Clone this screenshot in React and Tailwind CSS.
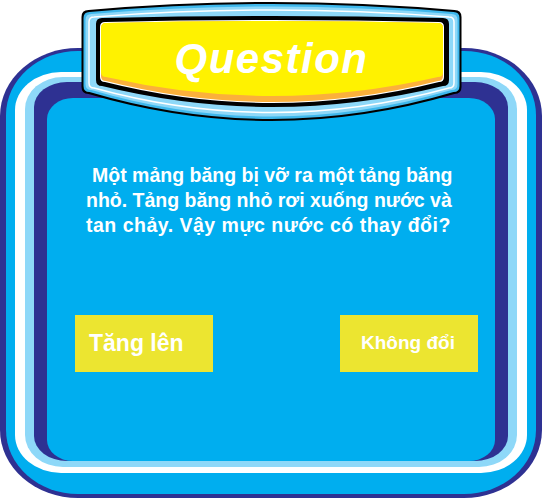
import React from 'react';

// rounded banner outline: flat-ish top arc, deeper bottom arc
const shape = (l, r, tc, tm, bc, bm, rad) => {
  const cx = (l + r) / 2;
  return `M${l + rad} ${tc} Q${cx} ${2 * tm - tc} ${r - rad} ${tc} Q${r} ${tc} ${r} ${tc + rad} L${r} ${bc - rad} Q${r} ${bc} ${r - rad} ${bc} Q${cx} ${2 * bm - bc} ${l + rad} ${bc} Q${l} ${bc} ${l} ${bc - rad} L${l} ${tc + rad} Q${l} ${tc} ${l + rad} ${tc} Z`;
};

function Banner() {
  return (
    <div className="absolute left-[80px] top-0 z-10 h-[124px] w-[383px]">
      <svg width="383" height="124" viewBox="0 0 383 124" className="absolute inset-0">
        <path d={shape(1.5, 381.5, 10, 2, 94, 121, 7)} fill="#000" />
        <path d={shape(3.5, 379.5, 12, 4, 92, 119, 6)} fill="#3fb8ec" />
        <path d={shape(5.5, 377.5, 14, 6.5, 90, 116.5, 6)} fill="#8ed8f8" />
        <path d={shape(9, 374, 17, 10, 88, 112.5, 5)} fill="none" stroke="#fff" strokeWidth="1.5" />
        <path d={shape(16, 369, 18, 16, 86, 107, 6)} fill="#000" />
        <path d={shape(20, 364, 22, 20, 82, 103, 5)} fill="#fff" />
        <path d={shape(21, 363, 23, 21, 81, 102, 5)} fill="#fbb03b" />
        <path d={shape(21, 363, 23, 21, 77, 96, 5)} fill="#fff200" />
      </svg>
      <div className="absolute left-0 top-[38px] w-full text-center font-['Liberation_Sans',Arial,sans-serif] text-[42px] font-bold italic leading-[42px] tracking-[1.5px] text-white">
        Question
      </div>
    </div>
  );
}

export default function App() {
  return (
    <div className="relative h-[498px] w-[542px] overflow-hidden bg-white pt-[48px] font-['Liberation_Sans',Arial,sans-serif]">
      <Banner />
      {/* frame rings, outside in */}
      <div className="flex h-[450px] flex-col rounded-[78px/68px] bg-[#2e3192] px-[6px] pb-[4px] pt-[3px]">
        <div className="flex flex-1 flex-col rounded-[72px/64px] bg-[#00aeef] px-[9px] py-[21px]">
          <div className="flex flex-1 flex-col rounded-[46px/38px] bg-white px-[10px] pb-[6px] pt-[5px]">
            <div className="flex flex-1 flex-col rounded-[38px/32px] bg-[#8ed8f8] px-[9px] pb-[6px] pt-[5px]">
              <div className="flex flex-1 flex-col rounded-[33px/25px] bg-[#2e3192] px-[13px] pt-[16px]">
                <div className="flex flex-1 flex-col rounded-[26px/21px] bg-[#00aeef] pl-[39px] pt-[65px]">
                  <p className="text-[19.5px] font-bold leading-[25px] text-white">
                    <span className="block pl-[6px]">Một mảng băng bị vỡ ra một tảng băng</span>
                    <span className="block">nhỏ. Tảng băng nhỏ rơi xuống nước và</span>
                    <span className="block tracking-[0.5px]">tan chảy. Vậy mực nước có thay đổi?</span>
                  </p>
                  <div className="-ml-[11px] mt-[77px] flex justify-between pr-[17px]">
                    <button className="flex h-[57px] w-[138px] items-center bg-[#ece530] pl-[14px] text-[23px] font-bold text-white">
                      Tăng lên
                    </button>
                    <button className="flex h-[57px] w-[138px] items-center bg-[#ece530] pl-[21px] text-[19px] font-bold text-white">
                      Không đổi
                    </button>
                  </div>
                </div>
              </div>
            </div>
          </div>
        </div>
      </div>
    </div>
  );
}
